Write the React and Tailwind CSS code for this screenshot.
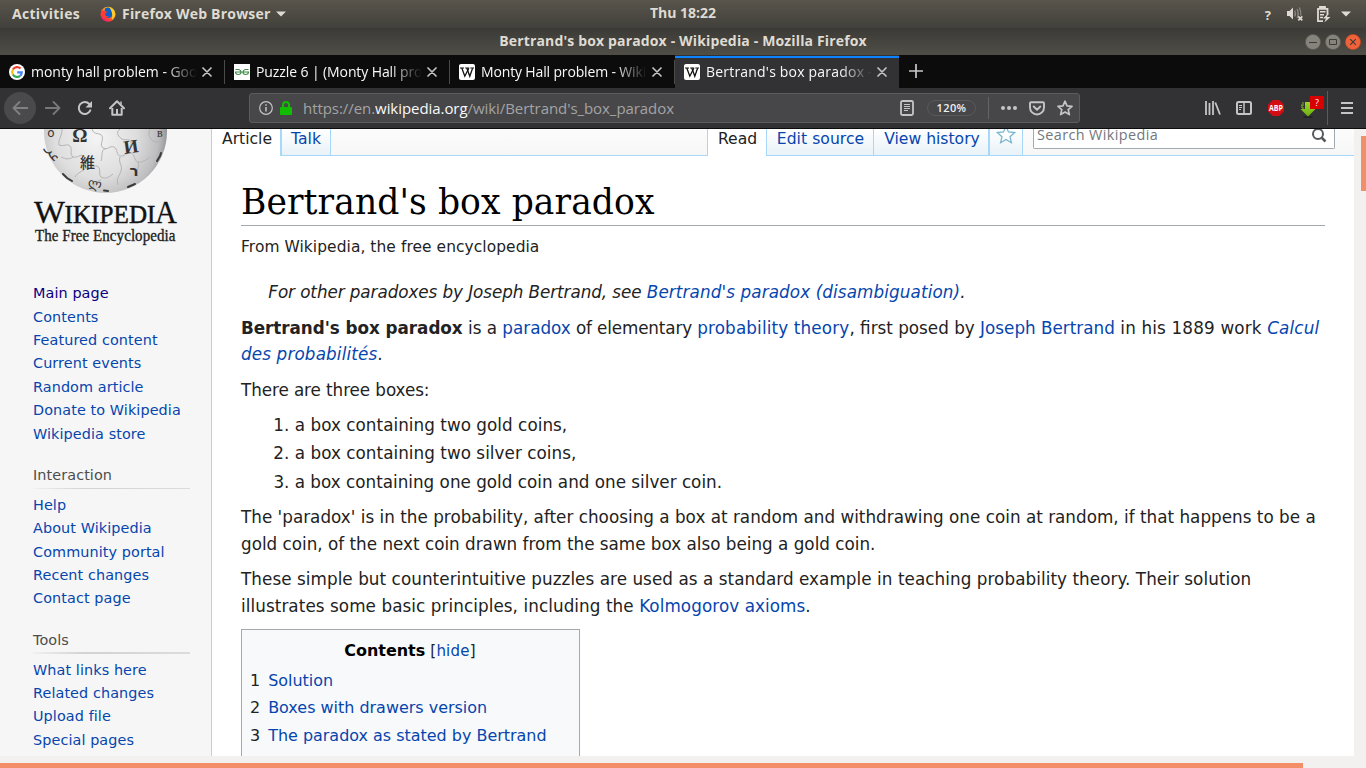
import React from "react";

const ui = "font-['Open_Sans','Noto_Sans',sans-serif]";

function FirefoxLogo() {
  return (
    <svg width="16" height="16" viewBox="0 0 16 16">
      <defs>
        <linearGradient id="fx" x1="1" y1="0" x2="0.2" y2="1">
          <stop offset="0" stopColor="#ffe226" />
          <stop offset="0.45" stopColor="#ff9a1e" />
          <stop offset="0.75" stopColor="#ff3b3b" />
          <stop offset="1" stopColor="#e3187f" />
        </linearGradient>
      </defs>
      <circle cx="8" cy="8.2" r="7.5" fill="url(#fx)" />
      <path d="M5 2.5C8 .5 12 2 13 5c.8 3-.6 6.3-4 7-3 .4-5-1.4-5-4z" fill="#0a5fc8" />
      <path d="M9 1c3 1 5.800 3.500 5.800 7.300 0 2.200-1.200 4.500-2.800 5.600C12.500 11 13 6 9 1z" fill="#ffd02a" />
      <path d="M1.200 3.500L4 5l3 .5-.5 1.300L5 8c.3 2 2 2.800 4 2.200-1 2-4 2.300-6 .5C1 9 .6 6 1.200 3.500z" fill="#ff3d2e" />
    </svg>
  );
}

function GoogleIcon() {
  return (
    <svg width="16" height="16" viewBox="0 0 16 16">
      <circle cx="8" cy="8" r="8" fill="#fff" />
      <g fill="none" strokeWidth="2.200">
        <path d="M11.600 4.600A4.800 4.800 0 0 0 3.900 5.500" stroke="#ea4335" />
        <path d="M3.900 5.500a4.900 4.900 0 0 0 0 5" stroke="#fbbc05" />
        <path d="M3.900 10.500a4.800 4.800 0 0 0 7.300 1.300" stroke="#34a853" />
        <path d="M11.200 11.800A4.800 4.800 0 0 0 12.800 8.300H8.200" stroke="#4285f4" />
      </g>
    </svg>
  );
}

function GeeksIcon() {
  return (
    <svg width="16" height="16" viewBox="0 0 16 16">
      <path d="M0 0h16v16H0z" fill="#fff" />
      <g fill="none" stroke="#3f8a4b" strokeWidth="1.100">
        <path d="M1.500 5.500h3.300c1.500.5 2.200 1.500 2.200 2.800s-1 2.200-2.600 2.200S1.500 9.800 1.500 8H8" />
        <path d="M14.500 5.500h-3.300C9.700 6 9 7 9 8.300s1 2.200 2.600 2.200 2.900-.7 2.900-2.500H8" />
      </g>
    </svg>
  );
}

function WikiIcon() {
  return (
    <svg width="16" height="16" viewBox="0 0 16 16">
      <rect width="16" height="16" rx="2" fill="#fff" />
      <path d="M1 4h4M6.200 4h4M11.300 4h3.700" stroke="#111" strokeWidth="1" />
      <path d="M2.800 4l3 8.200L9.800 4.200" fill="none" stroke="#111" strokeWidth="1.300" />
      <path d="M7.800 4l3 8.200L13.600 4.200" fill="none" stroke="#111" strokeWidth="1.300" />
    </svg>
  );
}

const Cross = () => (
  <svg width="10" height="10" viewBox="0 0 10 10">
    <path d="M1 1l8 8M9 1L1 9" stroke="#c4c4c5" strokeWidth="1.700" strokeLinecap="round" />
  </svg>
);

function Tab({ icon, text, active, spacing }) {
  return (
    <div className={"relative flex h-full w-[225px] shrink-0 items-center pl-[9px] " + (active ? "bg-[#323234]" : "")}>
      {active && <div className="absolute left-0 top-px h-[2px] w-[224px] bg-[#0a84ff]" />}
      {active && <div className="absolute right-0 top-0 h-full w-px bg-[#0c0c0d]" />}
      {icon}
      <div
        className={
          "ml-[6px] w-[166px] overflow-hidden whitespace-nowrap text-[14px] leading-[20px] text-[#f9f9fa] [mask-image:linear-gradient(to_right,black_134px,transparent_166px)] " +
          spacing
        }
      >
        {text}
      </div>
      <div className="ml-[5px] flex">
        <Cross />
      </div>
      {!active && <div className="absolute right-0 top-[5px] h-[24px] w-px bg-[#4a4a4b]" />}
    </div>
  );
}

function TopBar() {
  return (
    <div className="relative flex h-[28px] shrink-0 items-center bg-linear-to-b from-[#59554d] to-[#41403a] text-[14px] font-bold leading-[26px] text-[#dfdbd2]">
      <div className="ml-[12px] w-[69px] whitespace-nowrap tracking-[0.3px]">Activities</div>
      <div className="ml-[19px] flex">
        <FirefoxLogo />
      </div>
      <div className="ml-[6px] w-[150px] whitespace-nowrap tracking-[0.200px]">Firefox Web Browser</div>
      <svg className="ml-[4px]" width="10" height="6" viewBox="0 0 10 6"><path d="M0 .5h10L5 5.500z" fill="#dfdbd2" /></svg>
      <div className="absolute inset-x-0 top-0 text-center text-[14px]">Thu 18:22</div>
      <div className="ml-auto flex items-center pr-[15px]">
        <div className="mr-[15px] pt-[2px] text-[13px] font-bold">?</div>
        <svg width="18" height="16" viewBox="0 0 18 16" className="mr-[12px]">
          <path d="M1 5h2.500L7 1.500v12L3.500 10H1z" fill="#dfdbd2" />
          <path d="M8.700 4.500q1.600 3 0 6M11 3q2.500 4.500 0 9M13.300 1.500q2 4 1.500 8" fill="none" stroke="#8b8982" strokeWidth="1.300" />
          <path d="M12.300 10.300l4 4M16.300 10.300l-4 4" stroke="#dfdbd2" strokeWidth="1.700" />
        </svg>
        <svg width="15" height="17" viewBox="0 0 15 17" className="mr-[10px]">
          <path d="M4 2.500V1h5v1.500M2 2.800h9.500V9M2 2v13.200h5" fill="none" stroke="#dfdbd2" strokeWidth="1.800" />
          <path d="M4 5.800h5.500M4 8.700h4M4 11.600h3" stroke="#dfdbd2" strokeWidth="1.500" />
          <path d="M12.500 7L7 12.500h3L8.300 16.500 14.500 11H11z" fill="#dfdbd2" />
        </svg>
        <svg width="10" height="6" viewBox="0 0 10 6"><path d="M0 .5h10L5 5.500z" fill="#dfdbd2" /></svg>
      </div>
    </div>
  );
}

function TitleBar() {
  return (
    <div className="relative flex h-[27px] shrink-0 items-center justify-end gap-[4px] bg-linear-to-b from-[#3b3a36] to-[#504e47] pr-[5px]">
      <div className="absolute inset-x-0 top-0 text-center text-[14px] font-bold leading-[26px] tracking-[0.150px] text-[#dfdbd2]">
        Bertrand's box paradox - Wikipedia - Mozilla Firefox
      </div>
      {["min", "max", "close"].map((k) => (
        <svg key={k} width="16" height="16" viewBox="0 0 16 16">
          <circle cx="8" cy="8" r="7.600" fill={k === "close" ? "#f0623a" : "#85837c"} stroke={k === "close" ? "#c2481f" : "#5b5954"} strokeWidth="0.700" />
          {k === "min" && <path d="M4 8.500h8" stroke="#3c3b37" />}
          {k === "max" && <path d="M4.500 5.500h7v5h-7z" fill="none" stroke="#3c3b37" />}
          {k === "close" && <path d="M5.200 5.200l5.600 5.600M10.800 5.200l-5.600 5.600" stroke="#3c3b37" strokeWidth="1.200" />}
        </svg>
      ))}
    </div>
  );
}

function TabStrip() {
  return (
    <div className="flex h-[33px] shrink-0 bg-[#0c0c0d]">
      <Tab icon={<GoogleIcon />} text="monty hall problem - Google Search" spacing="tracking-[-0.03px]" />
      <Tab icon={<GeeksIcon />} text="Puzzle 6 | (Monty Hall problem)" spacing="tracking-[-0.1px]" />
      <Tab icon={<WikiIcon />} text="Monty Hall problem - Wikipedia" spacing="tracking-[-0.150px]" />
      <Tab icon={<WikiIcon />} text="Bertrand's box paradox - Wikipedia" spacing="tracking-[0.200px]" active />
      <svg className="ml-[9px] mt-[9px]" width="14" height="14" viewBox="0 0 14 14">
        <path d="M7 0v14M0 7h14" stroke="#c8c8c9" strokeWidth="1.700" />
      </svg>
    </div>
  );
}

const G = "#c5c5c6";

function NavBar() {
  return (
    <div className="flex h-[41px] shrink-0 items-center border-b border-[#0c0c0d] bg-[#323234]">
      <div className="ml-[4px] flex h-[32px] w-[32px] items-center justify-center rounded-full bg-[#4a4a4c]">
        <svg width="16" height="16" viewBox="0 0 16 16"><path d="M15.500 8H1.500M7.500 2L1.500 8l6 6" fill="none" stroke="#818183" strokeWidth="1.800" strokeLinecap="round" strokeLinejoin="round" /></svg>
      </div>
      <svg className="ml-[9px]" width="16" height="16" viewBox="0 0 16 16"><path d="M.5 8h14M8.500 2l6 6-6 6" fill="none" stroke="#78787a" strokeWidth="1.800" strokeLinecap="round" strokeLinejoin="round" /></svg>
      <svg className="ml-[16px]" width="16" height="16" viewBox="0 0 16 16">
        <path d="M13.300 10.400A6 6 0 1 1 12.300 4" fill="none" stroke={G} strokeWidth="2" strokeLinecap="round" />
        <path d="M15 1v6.500H8.500z" fill={G} />
      </svg>
      <svg className="ml-[16px]" width="16" height="16" viewBox="0 0 16 16">
        <path d="M1 8.300l7-7 7 7" fill="none" stroke={G} strokeWidth="2" strokeLinecap="round" strokeLinejoin="round" />
        <path d="M3.300 8v6.800h9.400V8" fill="none" stroke={G} strokeWidth="2" strokeLinejoin="round" />
        <path d="M7 9h2v6H7z" fill={G} />
        <path d="M12 1.500v3" stroke={G} strokeWidth="1.500" />
      </svg>
      <div className="ml-[124px] flex h-[30px] w-[831px] items-center rounded-[3px] border border-[#5c5c5e] bg-[#474749]">
        <svg className="ml-[9px] shrink-0" width="14" height="14" viewBox="0 0 14 14">
          <circle cx="7" cy="7" r="6.300" fill="none" stroke={G} strokeWidth="1.200" />
          <path d="M7 6v4.500M7 3.300v1.500" stroke={G} strokeWidth="1.500" />
        </svg>
        <svg className="ml-[7px] shrink-0" width="12" height="14" viewBox="0 0 12 14">
          <path d="M3 7V4a3 3 0 0 1 6 0v3" fill="none" stroke="#12bc00" strokeWidth="2" />
          <rect y="6" width="12" height="8" rx="1" fill="#12bc00" />
        </svg>
        <div className="ml-[11px] w-[590px] whitespace-nowrap text-[15px] leading-[24px] tracking-[-0.060px] text-[#a3a3a4]">
          https://en.<span className="text-[#f9f9fa]">wikipedia.org</span>/wiki/Bertrand's_box_paradox
        </div>
        <svg className="ml-[7px] shrink-0" width="14" height="16" viewBox="0 0 14 16">
          <rect x="1" y="1" width="12" height="14" rx="1.500" fill="none" stroke={G} strokeWidth="1.800" />
          <path d="M4 4.500h6M4 6.500h6M4 8.500h6M4 10.500h4" stroke={G} />
        </svg>
        <div className="ml-[13px] h-[16px] w-[49px] shrink-0 rounded-full border border-[#59595b] text-center text-[11px] font-semibold leading-[14px] tracking-[0.400px] text-[#f0f0f1]">120%</div>
        <div className="ml-[12px] h-[22px] w-px shrink-0 bg-[#646466]" />
        <svg className="ml-[12px] shrink-0" width="16" height="4" viewBox="0 0 16 4"><g fill={G}><circle cx="2" cy="2" r="2" /><circle cx="8" cy="2" r="2" /><circle cx="14" cy="2" r="2" /></g></svg>
        <svg className="ml-[12px] shrink-0" width="16" height="16" viewBox="0 0 16 16">
          <path d="M2 2.200h12a1 1 0 0 1 1 1V7.500a7 7 0 0 1-14 0V3.200a1 1 0 0 1 1-1z" fill="none" stroke={G} strokeWidth="1.900" />
          <path d="M4.700 6.500L8 9.700l3.300-3.200" fill="none" stroke={G} strokeWidth="1.900" strokeLinecap="round" strokeLinejoin="round" />
        </svg>
        <svg className="ml-[12px] shrink-0" width="16" height="16" viewBox="0 0 16 16">
          <path d="M8 1.200l2 4.600 5 .5-3.800 3.300 1.200 5L8 12l-4.400 2.600 1.200-5L1 6.300l5-.5z" fill="none" stroke={G} strokeWidth="1.700" strokeLinejoin="round" />
        </svg>
      </div>
      <svg className="ml-[125px]" width="16" height="14" viewBox="0 0 16 14">
        <path d="M1 0v14M4.500 2v12M8 0v14M10.300 1.500L15 13.500" stroke={G} strokeWidth="1.800" />
      </svg>
      <svg className="ml-[15px]" width="16" height="14" viewBox="0 0 16 14">
        <rect x="1" y="1" width="14" height="12" rx="1.500" fill="none" stroke={G} strokeWidth="2" />
        <path d="M8 1v12" stroke={G} strokeWidth="1.500" />
        <path d="M3 4.500h3M3 6.500h3M3 8.500h2" stroke={G} />
      </svg>
      <svg className="ml-[16px]" width="16" height="16" viewBox="0 0 16 16">
        <path d="M4.700 0h6.600L16 4.700v6.600L11.300 16H4.700L0 11.300V4.700z" fill="#d40d12" />
        <text x="8" y="11.200" textAnchor="middle" textLength="14" lengthAdjust="spacingAndGlyphs" fontSize="9" fontWeight="700" fill="#fff" fontFamily="Open Sans, sans-serif">ABP</text>
      </svg>
      <svg className="ml-[16px]" width="24" height="24" viewBox="0 0 24 24">
        <defs>
          <linearGradient id="dl" x1="0" y1="0" x2="0" y2="1">
            <stop offset="0" stopColor="#9ad32a" />
            <stop offset="1" stopColor="#6fb010" />
          </linearGradient>
        </defs>
        <ellipse cx="8" cy="21" rx="5" ry="1" fill="#222223" />
        <path d="M5 6h6v7h4.500L8 20.500.5 13H5z" fill="url(#dl)" />
        <path d="M1 9h1v3h2M3 6v4" fill="none" stroke="#7cb518" />
        <path d="M10 0h14v13H10z" fill="#d90000" />
        <text x="17" y="10" textAnchor="middle" fontSize="9" fill="#fff" fontFamily="Open Sans, sans-serif">?</text>
      </svg>
      <div className="ml-[3px] h-[34px] w-px bg-[#5b5b5d]" />
      <svg className="ml-[13px]" width="12" height="12" viewBox="0 0 12 12"><path d="M0 1h12M0 6h12M0 11h12" stroke={G} strokeWidth="2" /></svg>
    </div>
  );
}

function Logo() {
  return (
    <svg className="block" width="211" height="120" viewBox="0 129 211 120">
      <defs>
        <radialGradient id="globe" cx="0.42" cy="0.55" r="0.6">
          <stop offset="0" stopColor="#f4f4f4" />
          <stop offset="0.55" stopColor="#dedede" />
          <stop offset="0.85" stopColor="#bdbdbf" />
          <stop offset="1" stopColor="#8c8c8e" />
        </radialGradient>
      </defs>
      <circle cx="105.500" cy="131.500" r="61.500" fill="url(#globe)" />
      <g fill="none" stroke="#b4b4b4" strokeWidth="1">
        <path d="M62 129c0 8-4 10-3 16 5 2 8-2 11 1s-1 8 3 11c5 1 7-3 11-1 4 4-2 8 2 12 5 2 7-3 11-2 5 3 1 8 4 11 5 3 9-1 12-3" />
        <path d="M92 129c2 7 8 3 10 7s-3 9 1 12 7-3 11-1 2 8 6 9 7-4 11-3 3 8 7 9 8-2 12-5" />
        <path d="M120 129c-5 4-1 8 2 10s8-1 9 3-4 7-1 11M106 148c-6 3-3 8-5 13M120 157c-2 6 3 8 1 14s-5 7-3 14M73 157c-5 3-7 2-12 0M86 168c-4 4-8 4-11 9M138 162c2 5-2 8-1 14M150 129c-2 6-1 8 2 11s5 2 8 1M101 180c-4 1-7 3-8 8" />
      </g>
      <g fill="#333" textAnchor="middle" fontFamily="Liberation Serif, Noto Sans CJK JP, serif">
        <text x="80" y="141.500" fontSize="19" fontWeight="700">Ω</text>
        <text x="131" y="153" fontSize="19" fontWeight="700" transform="rotate(-8 131 147)">И</text>
        <text x="87.500" y="168" fontSize="15" fontWeight="500" fontFamily="Noto Sans CJK JP">維</text>
        <text x="134" y="176" fontSize="15" fontWeight="700" fontFamily="DejaVu Sans">ר</text>
        <text x="54" y="159" fontSize="14" fontFamily="DejaVu Sans" transform="rotate(70 54 154)">عر</text>
        <text x="51" y="137" fontSize="12" fontFamily="DejaVu Sans">о</text>
        <text x="95" y="188" fontSize="13" fontFamily="DejaVu Sans" transform="rotate(12 95 184)">ლ</text>
        <text x="160" y="137" fontSize="12">в</text>
      </g>
      <g fill="none" stroke="#3a3a3a" strokeWidth="2" strokeLinecap="round">
        <path d="M63 174l4 4 5 3M157 161l3-5 1-3M128 187l7-3M104 190.500l4 .5" />
      </g>
      <g fontFamily="Liberation Serif, serif" fill="#111">
        <text x="34" y="223" fontSize="32" textLength="31" lengthAdjust="spacingAndGlyphs" stroke="#111" strokeWidth="0.300">W</text>
        <text x="64.500" y="223" fontSize="24.500" textLength="91" lengthAdjust="spacingAndGlyphs" stroke="#111" strokeWidth="0.500">IKIPEDI</text>
        <text x="155" y="223" fontSize="32" textLength="22" lengthAdjust="spacingAndGlyphs" stroke="#111" strokeWidth="0.300">A</text>
        <text x="35" y="240.500" fontSize="16" textLength="140.500" lengthAdjust="spacingAndGlyphs" fill="#222" stroke="#222" strokeWidth="0.350">The Free Encyclopedia</text>
      </g>
    </svg>
  );
}

const NavLinks = ({ items }) => (
  <ul>
    {items.map((t) => (
      <li key={t} className={"h-[23.4px] leading-[23.4px] " + (t === "Main page" ? "text-[#0b0080]" : "text-[#0645ad]")}>{t}</li>
    ))}
  </ul>
);

const Portal = ({ title, items, thick }) => (
  <div className="pt-[18.200px]">
    <h3 className="h-[23.4px] leading-[23.4px] text-[#4d4d4d]">{title}</h3>
    <div
      className={
        "w-[157px] bg-linear-to-r from-[#f0f0f0] via-[#d2d2d2] via-33% to-[#dcdcdc] " +
        (thick ? "mb-[4.200px] mt-[0.100px] h-[2px]" : "mb-[4.900px] mt-[0.400px] h-px")
      }
    />
    <NavLinks items={items} />
  </div>
);

function Sidebar() {
  return (
    <div className="w-[211px] shrink-0 bg-[#f6f6f6] text-[14.4px] tracking-[0.090px]">
      <Logo />
      <div className="pl-[33px] pt-[33.250px]">
        <NavLinks items={["Main page", "Contents", "Featured content", "Current events", "Random article", "Donate to Wikipedia", "Wikipedia store"]} />
        <Portal title="Interaction" items={["Help", "About Wikipedia", "Community portal", "Recent changes", "Contact page"]} />
        <Portal thick title="Tools" items={["What links here", "Related changes", "Upload file", "Special pages"]} />
      </div>
    </div>
  );
}

const A = ({ children }) => <span className="text-[#0645ad]">{children}</span>;

const tabBase = "flex h-[27px] shrink-0 justify-center whitespace-nowrap pt-0 leading-[20px] ";
const linkTab = tabBase + "border-b border-[#a7d7f9] bg-linear-to-b from-white to-[#e8f2f8] text-[#0645ad] ";

function PageHeader() {
  return (
    <div className="flex h-[27px] bg-linear-to-b from-[#fcfcfc] to-[#f6f6f6] text-[15.6px]">
      <div className={tabBase + "w-[68px] bg-white pl-[2px] text-[#222]"}>Article</div>
      <div className={linkTab + "w-[51px] border-l-2 border-r"}>Talk</div>
      <div className="w-[377px] border-b border-r border-[#a7d7f9]" />
      <div className={tabBase + "w-[58px] bg-white pl-[1px] text-[#222]"}>Read</div>
      <div className={linkTab + "w-[107px] border-l pl-px tracking-[0.050px]"}>Edit source</div>
      <div className={linkTab + "w-[115px] border-l pl-[2px]"}>View history</div>
      <div className={linkTab + "w-[35px] border-l-2 border-r pr-px"}>
        <svg className="mt-[-4px]" width="20" height="19" viewBox="0 0 20 19">
          <path d="M10 1l2.500 6 6.200.6-4.700 4.100 1.400 6L10 14.500l-5.400 3.200 1.400-6L1.300 7.600 7.500 7z" fill="#fdfeff" stroke="#7cb5d1" strokeWidth="1.300" />
        </svg>
      </div>
      <div className="flex flex-1 border-b border-[#a7d7f9] pl-[10px]">
        <div className="flex h-[20px] w-[302px] justify-between rounded-b-[2px] border border-t-0 border-[#a2a9b1] bg-white pl-[3px] pr-[7px] font-['Open_Sans',sans-serif] text-[14.400px] leading-[12px] text-[#72777d]">
          <span className="tracking-[0.400px]">Search Wikipedia</span>
          <svg width="16" height="14" viewBox="0 0 16 14">
            <circle cx="7" cy="5" r="5" fill="none" stroke="#54595d" strokeWidth="2" />
            <path d="M10.500 8.500L14.500 12.500" stroke="#54595d" strokeWidth="2.500" />
          </svg>
        </div>
      </div>
    </div>
  );
}

function Article() {
  return (
    <div className="px-[29px] pt-[24.400px] text-[16.8px] leading-[26.88px] text-[#222]">
      <h1 className="border-b border-[#a2a9b1] font-['DejaVu_Serif',serif] text-[34.56px] leading-[44.900px] tracking-[0.090px] text-black">Bertrand's box paradox</h1>
      <div className="mb-[19.650px] mt-[8.640px] text-[15.456px] leading-[24.700px] tracking-[0.070px]">From Wikipedia, the free encyclopedia</div>
      <div className="mb-[8.400px] whitespace-nowrap pl-[27.300px] italic tracking-[-0.070px]">
        For other paradoxes by Joseph Bertrand, see <span className="tracking-[0.110px]"><A>Bertrand's paradox (disambiguation)</A></span>.
      </div>
      <p className="mb-[8.400px] whitespace-nowrap">
        <b className="tracking-[-0.040px]">Bertrand's box paradox</b> is a <A>paradox</A>
        <span className="tracking-[-0.140px]"> of elementary </span>
        <span className="tracking-[0.150px]"><A>probability theory</A></span>, first posed by <A>Joseph Bertrand</A>
        <span className="tracking-[0.170px]"> in his 1889 work </span>
        <i className="tracking-[0.140px]"><A>Calcul<br />des probabilités</A></i>.
      </p>
      <p className="mb-[8.400px] tracking-[-0.080px]">There are three boxes:</p>
      <ol className="mb-[8.400px] ml-[53.760px] flex list-decimal flex-col gap-[1.680px]">
        <li className="tracking-[0.040px]">a box containing two gold coins,</li>
        <li className="tracking-[0.040px]">a box containing two silver coins,</li>
        <li>a box containing one gold coin and one silver coin.</li>
      </ol>
      <p className="mb-[8.400px] whitespace-nowrap">
        <span className="tracking-[0.016px]">The 'paradox' is in the probability, after choosing a box at random and withdrawing one coin at random, if that happens to be a</span><br />
        gold coin, of the next coin drawn from the same box also being a gold coin.
      </p>
      <p className="mb-[8.400px] whitespace-nowrap tracking-[0.062px]">
        These simple but counterintuitive puzzles are used as a standard example in teaching probability theory. Their solution<br />
        <span className="tracking-[0.075px]">illustrates some basic principles, including the <A>Kolmogorov axioms</A>.</span>
      </p>
      <div className="h-[160px] w-[339px] border border-[#a2a9b1] bg-[#f8f9fa] px-[8px] pt-[8.750px] text-[15.960px] leading-[25.500px]">
        <div className="mb-[2px] pr-px text-center">
          <b className="text-black">Contents</b> <span className="text-[15px] tracking-[0.200px]">[<A>hide</A>]</span>
        </div>
        {["Solution", "Boxes with drawers version", "The paradox as stated by Bertrand"].map((t, i) => (
          <div key={t} className="flex h-[27.400px] gap-[8px] leading-[27.400px]">
            <span>{i + 1}</span>
            <A>{t}</A>
          </div>
        ))}
      </div>
    </div>
  );
}

export default function App() {
  return (
    <div className={"flex h-[768px] w-[1366px] flex-col overflow-hidden bg-[#f2f1f0] " + ui}>
      <TopBar />
      <TitleBar />
      <TabStrip />
      <NavBar />
      <div className="flex h-[627px] shrink-0 overflow-hidden font-['DejaVu_Sans',sans-serif]">
        <Sidebar />
        <div className="w-[1143px] shrink-0 border-l border-[#a7d7f9] bg-white">
          <PageHeader />
          <Article />
        </div>
        <div className="flex w-[12px] justify-end pt-[7px]">
          <div className="h-[55px] w-[5px] bg-[#f28f68]" />
        </div>
      </div>
      <div className="h-[12px] pt-[7px]">
        <div className="h-[5px] w-[1303px] bg-[#f28f68]" />
      </div>
    </div>
  );
}
